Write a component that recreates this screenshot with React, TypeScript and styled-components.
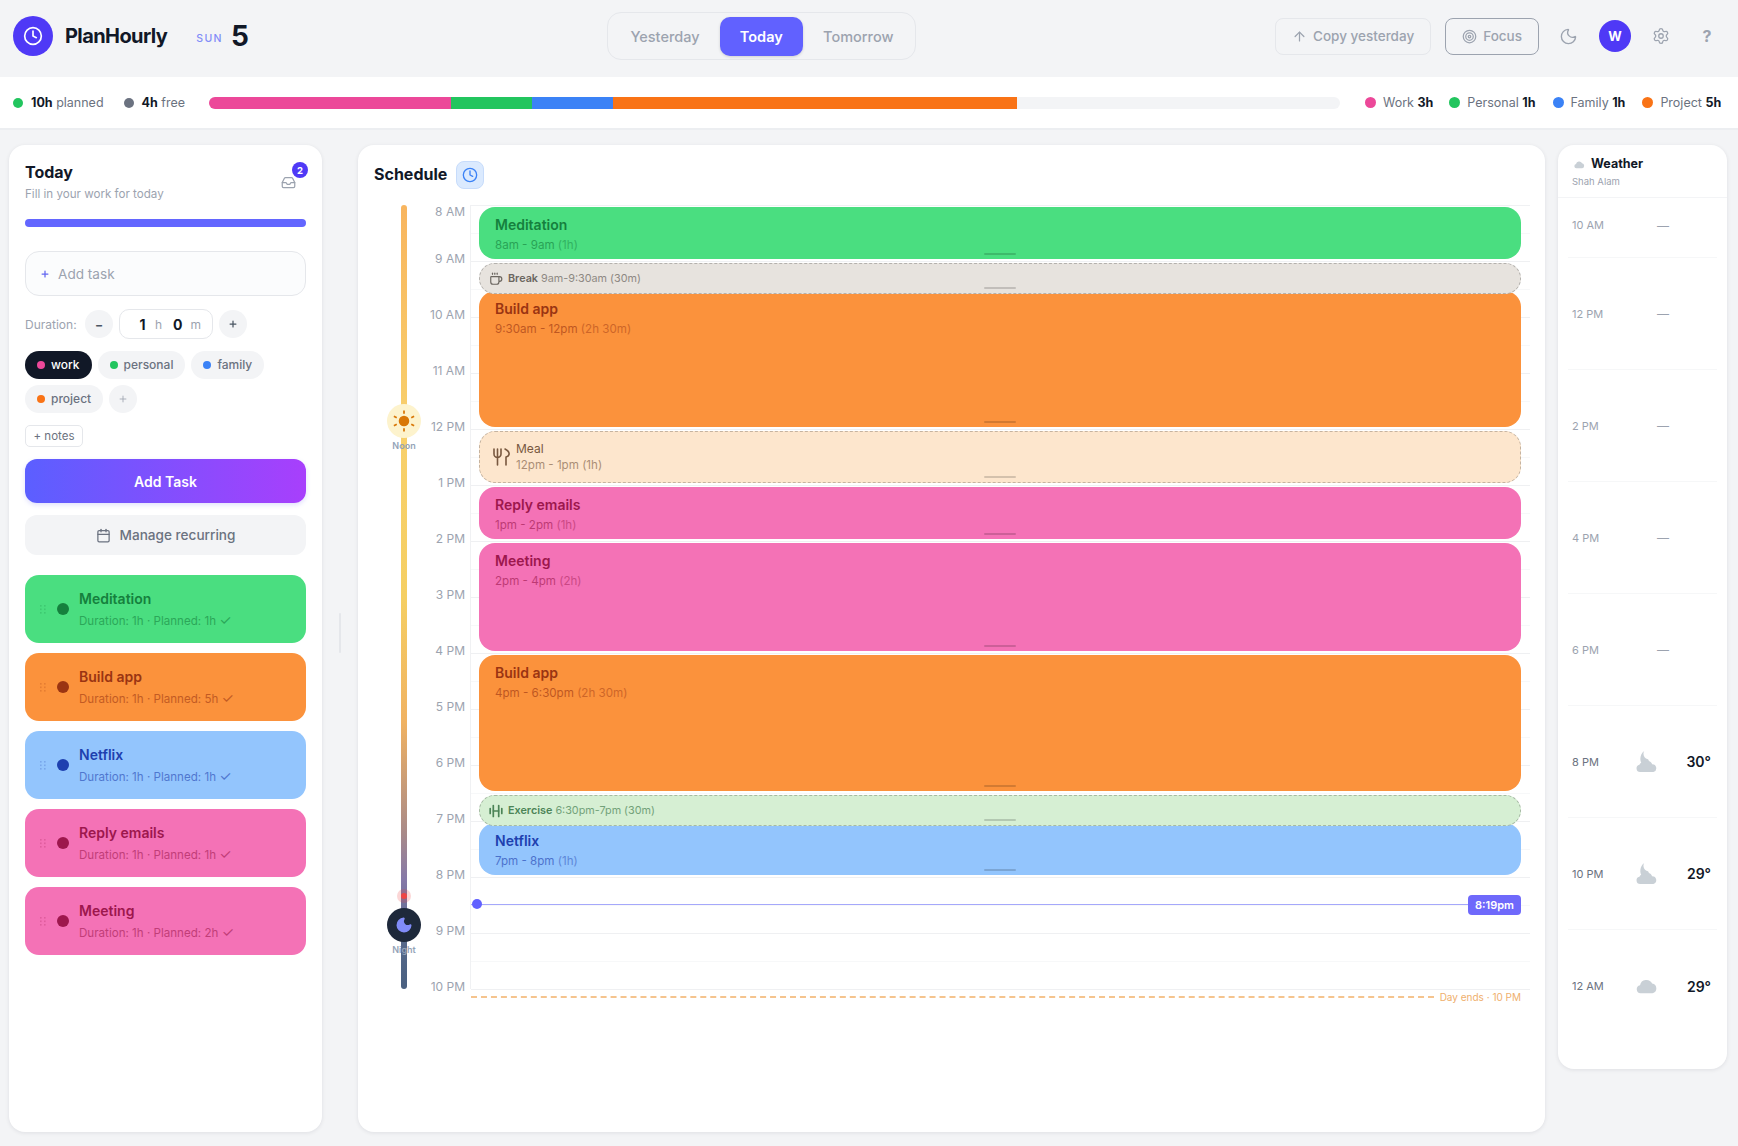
import React from "react";
import styled, { createGlobalStyle } from "styled-components";
import { ArrowUp, Calendar, Clock, Coffee, Inbox, Moon, Plus, Settings, Target } from "lucide-react";

const GlobalStyle = createGlobalStyle`
  html, body { margin: 0; padding: 0; background: #f3f4f6; }
  body { font-family: Inter, "Noto Sans", "Liberation Sans", sans-serif; color: #111827; }
  * { box-sizing: border-box; }
`;

const Page = styled.div`
  width: 1738px;
  height: 1146px;
  display: flex;
  flex-direction: column;
  overflow: hidden;
`;

/* top bar */
const Header = styled.header`
  height: 77px;
  padding: 0 15px 5px 13px;
  display: flex;
  justify-content: space-between;
  align-items: center;
`;
const Brand = styled.div`
  display: flex;
  align-items: center;
`;
const LogoMark = styled.div`
  width: 40px;
  height: 40px;
  border-radius: 50%;
  background: #4f39f6;
  color: #fff;
  display: flex;
  align-items: center;
  justify-content: center;
`;
const BrandName = styled.div`
  margin-left: 12px;
  font-size: 20px;
  font-weight: 700;
  letter-spacing: -0.6px;
`;
const DayName = styled.span`
  margin-left: 29px;
  font-size: 10.5px;
  font-weight: 500;
  letter-spacing: 1.4px;
  color: #818cf8;
  align-self: flex-end;
  padding-bottom: 11px;
`;
const DayNumber = styled.span`
  margin-left: 8px;
  font-size: 28px;
  font-weight: 700;
`;
const Segments = styled.div`
  width: 309px;
  height: 48px;
  border: 1px solid #e5e7eb;
  border-radius: 14px;
  padding: 4px;
  display: flex;
  align-items: center;
  justify-content: space-between;
`;
const Segment = styled.div<{ $active?: boolean }>`
  height: 39px;
  padding: 0 ${(p) => (p.$active ? 20 : 18)}px;
  border-radius: 10px;
  display: flex;
  align-items: center;
  font-size: 14.5px;
  font-weight: ${(p) => (p.$active ? 600 : 500)};
  color: ${(p) => (p.$active ? "#fff" : "#9ca3af")};
  background: ${(p) => (p.$active ? "#6161ff" : "transparent")};
  box-shadow: ${(p) => (p.$active ? "0 1px 3px rgba(0,0,0,.15)" : "none")};
`;
const HeaderActions = styled.div`
  display: flex;
  align-items: center;
  gap: 14px;
`;
const ActionButton = styled.div<{ $strong?: boolean }>`
  height: 37px;
  padding: 0 16px;
  border-radius: 8px;
  border: 1px solid ${(p) => (p.$strong ? "#9ca3af" : "#e5e7eb")};
  display: flex;
  align-items: center;
  gap: 6px;
  font-size: 13.5px;
  font-weight: 500;
  color: #9ca3af;
`;
const IconButton = styled.div`
  width: 32px;
  height: 32px;
  display: flex;
  align-items: center;
  justify-content: center;
  color: #9ca3af;
  font-size: 16px;
  font-weight: 700;
`;
const Avatar = styled.div`
  width: 32px;
  height: 32px;
  border-radius: 50%;
  background: #4f39f6;
  color: #fff;
  display: flex;
  align-items: center;
  justify-content: center;
  font-size: 13px;
  font-weight: 700;
`;

/* stats strip */
const StatsBar = styled.div`
  height: 53px;
  background: #fff;
  border-bottom: 2px solid #eceef1;
  padding: 0 13px;
  display: flex;
  align-items: center;
`;
const Stat = styled.div<{ $gap?: number }>`
  display: flex;
  align-items: center;
  font-size: 12.5px;
  color: #6b7280;
  white-space: nowrap;
  margin-right: ${(p) => p.$gap ?? 0}px;
  b {
    color: #111827;
    font-weight: 700;
  }
`;
const Dot = styled.i<{ $color: string; $size?: number; $gap?: number }>`
  display: block;
  flex: none;
  width: ${(p) => p.$size ?? 11}px;
  height: ${(p) => p.$size ?? 11}px;
  border-radius: 50%;
  background: ${(p) => p.$color};
  margin-right: ${(p) => p.$gap ?? 7}px;
`;
const Bar = styled.div`
  width: 1131px;
  height: 12px;
  margin-left: 24px;
  margin-right: 25px;
  border-radius: 6px;
  background: #f3f4f6;
  display: flex;
  overflow: hidden;
  flex: none;
`;
const BarPart = styled.div<{ $color: string; $hours: number }>`
  width: calc(100% * ${(p) => p.$hours} / 14);
  background: ${(p) => p.$color};
`;

/* main area */
const Main = styled.main`
  flex: 1;
  min-height: 0;
  padding: 15px 11px 14px 9px;
  display: flex;
  align-items: stretch;
`;
const Card = styled.section`
  background: #fff;
  border-radius: 16px;
  box-shadow: 0 1px 4px rgba(17, 24, 39, 0.09);
`;
const TodayCard = styled(Card)`
  width: 313px;
  flex: none;
  padding: 16px;
`;
const Gutter = styled.div`
  width: 36px;
  flex: none;
  display: flex;
  align-items: center;
  justify-content: center;
  padding-bottom: 12px;
`;
const GutterHandle = styled.div`
  width: 2px;
  height: 40px;
  border-radius: 1px;
  background: #e5e7eb;
`;
const TodayHead = styled.div`
  display: flex;
  justify-content: space-between;
`;
const CardTitle = styled.div`
  font-size: 16px;
  font-weight: 700;
  line-height: 22px;
`;
const CardSub = styled.div`
  margin-top: 3px;
  font-size: 11.6px;
  line-height: 16px;
  color: #9ca3af;
`;
const InboxWrap = styled.div`
  position: relative;
  width: 30px;
  padding: 13px 0 0 5px;
  color: #9ca3af;
`;
const Badge = styled.span`
  position: absolute;
  top: 1px;
  right: -2px;
  width: 16px;
  height: 16px;
  border-radius: 50%;
  background: #4f39f6;
  color: #fff;
  font-size: 9.5px;
  font-weight: 700;
  display: flex;
  align-items: center;
  justify-content: center;
`;
const Progress = styled.div`
  margin-top: 17px;
  height: 8px;
  border-radius: 4px;
  background: #6366ff;
`;
const AddInput = styled.div`
  margin-top: 24px;
  height: 45px;
  border: 1px solid #e5e7eb;
  border-radius: 14px;
  background: #fbfcfd;
  padding: 0 14px;
  display: flex;
  align-items: center;
  gap: 8px;
  font-size: 13.6px;
  color: #9ca3af;
  svg {
    color: #6366f1;
  }
`;
const DurationRow = styled.div`
  margin-top: 13px;
  display: flex;
  align-items: center;
  font-size: 12px;
  color: #9ca3af;
`;
const DurationLabel = styled.span`
  width: 60px;
`;
const RoundButton = styled.div<{ $soft?: boolean }>`
  width: 28px;
  height: 28px;
  border-radius: 50%;
  background: #f3f4f6;
  color: ${(p) => (p.$soft ? "#9ca3af" : "#4b5563")};
  display: flex;
  align-items: center;
  justify-content: center;
  flex: none;
`;
const DurationBox = styled.div`
  width: 94px;
  height: 30px;
  margin: 0 6px;
  border: 1px solid #e5e7eb;
  border-radius: 10px;
  display: flex;
  align-items: center;
  padding-left: 18px;
  font-size: 12px;
  color: #9ca3af;
  b {
    font-size: 14px;
    font-weight: 700;
    color: #111827;
    margin: 0 8px 0 0;
    min-width: 9px;
    text-align: center;
  }
  span {
    margin-right: 11px;
  }
`;
const Tags = styled.div`
  margin-top: 12px;
  display: flex;
  flex-wrap: wrap;
  gap: 6px;
  width: 250px;
`;
const Tag = styled.div<{ $active?: boolean }>`
  height: 28px;
  padding: 0 12px 1px;
  border-radius: 14px;
  display: flex;
  align-items: center;
  font-size: 12px;
  font-weight: 500;
  color: ${(p) => (p.$active ? "#fff" : "#6b7280")};
  background: ${(p) => (p.$active ? "#111827" : "#f3f4f6")};
`;
const NotesChip = styled.div`
  margin-top: 12px;
  width: 58px;
  height: 22px;
  border: 1px solid #e5e7eb;
  border-radius: 5px;
  display: flex;
  align-items: center;
  justify-content: center;
  font-size: 11.5px;
  color: #6b7280;
`;
const AddButton = styled.div`
  margin-top: 12px;
  height: 44px;
  border-radius: 12px;
  background: linear-gradient(90deg, #5b5fff, #a83ffc);
  box-shadow: 0 2px 5px rgba(99, 102, 241, 0.2);
  color: #fff;
  font-size: 14px;
  font-weight: 600;
  display: flex;
  align-items: center;
  justify-content: center;
`;
const RecurringButton = styled.div`
  margin-top: 12px;
  height: 40px;
  border-radius: 12px;
  background: #f3f4f6;
  color: #6b7280;
  font-size: 13.6px;
  font-weight: 500;
  display: flex;
  align-items: center;
  justify-content: center;
  gap: 9px;
`;
const TaskList = styled.div`
  margin-top: 20px;
  display: flex;
  flex-direction: column;
  gap: 10px;
`;
const TaskCard = styled.div<{ $bg: string; $ink: string }>`
  height: 68px;
  border-radius: 14px;
  background: ${(p) => p.$bg};
  color: ${(p) => p.$ink};
  display: flex;
  align-items: center;
  padding-left: 15px;
`;
const Grip = styled.svg`
  width: 6px;
  height: 9px;
  opacity: 0.22;
  margin-right: 11px;
  flex: none;
`;
const TaskDot = styled.i<{ $ink: string }>`
  display: block;
  width: 12px;
  height: 12px;
  border-radius: 50%;
  background: ${(p) => p.$ink};
  margin-right: 10px;
  flex: none;
`;
const TaskText = styled.div`
  padding-bottom: 1px;
`;
const TaskTitle = styled.div`
  font-size: 14px;
  font-weight: 600;
  line-height: 20px;
`;
const TaskMeta = styled.div`
  margin-top: 4px;
  font-size: 11.6px;
  line-height: 16px;
  opacity: 0.58;
`;
const CheckMark = styled.span`
  font-size: 14px;
  line-height: 14px;
`;

/* schedule */
const ScheduleCard = styled(Card)`
  flex: 1;
  min-width: 0;
  padding: 16px 15px 0 16px;
`;
const ScheduleHead = styled.div`
  height: 28px;
  display: flex;
  align-items: center;
  gap: 9px;
`;
const ScheduleTitle = styled.div`
  font-size: 16px;
  font-weight: 700;
  margin-bottom: 2px;
`;
const ClockChip = styled.div`
  width: 28px;
  height: 28px;
  border-radius: 8px;
  background: #dbeafe;
  border: 1px solid #c7dcfb;
  color: #3b82f6;
  display: flex;
  align-items: center;
  justify-content: center;
`;
const Timeline = styled.div`
  margin-top: 16px;
  display: flex;
`;
const RailColumn = styled.div`
  position: relative;
  width: 60px;
  flex: none;
  display: flex;
  justify-content: center;
`;
const Rail = styled.div`
  width: 6px;
  height: 784px;
  border-radius: 3px;
  background: linear-gradient(
    180deg,
    #f8b55f 0%,
    #f8d06c 28%,
    #f5cf63 50%,
    #f0b262 66%,
    #a98a88 80%,
    #8679a8 86%,
    #586a8c 93%,
    #4a6080 100%
  );
`;
const RailMarker = styled.div<{ $top: number }>`
  position: absolute;
  left: 0;
  right: 0;
  top: ${(p) => p.$top}px;
  display: flex;
  flex-direction: column;
  align-items: center;
  font-size: 9px;
  line-height: 12px;
  font-weight: 600;
  color: #94a3b8;
`;
const MarkerDisc = styled.div<{ $night?: boolean }>`
  width: 34px;
  height: 34px;
  margin-bottom: 2px;
  border-radius: 50%;
  background: ${(p) => (p.$night ? "#1e293b" : "#fdf3cd")};
  display: flex;
  align-items: center;
  justify-content: center;
`;
const NowDot = styled.div`
  position: absolute;
  left: 27px;
  top: 688px;
  width: 6px;
  height: 6px;
  border-radius: 50%;
  background: #ef4444;
  box-shadow: 0 0 0 4px rgba(239, 68, 68, 0.22);
`;
const LabelColumn = styled.div`
  width: 31px;
  margin-right: 5px;
  flex: none;
  display: flex;
  flex-direction: column;
  align-items: stretch;
`;
const HourLabel = styled.div`
  height: 56px;
  line-height: 14px;
  font-size: 12px;
  color: #9ca3af;
  white-space: nowrap;
  display: flex;
  justify-content: flex-end;
  &:first-child {
    height: 46.7px;
  }
`;
const Grid = styled.div`
  position: relative;
  flex: 1;
  height: 784px;
  border-left: 1px solid #f0f1f3;
  border-top: 1px solid #f0f1f3;
`;
const GridRow = styled.div<{ $hour: boolean }>`
  height: 28px;
  border-bottom: 1px solid ${(p) => (p.$hour ? "#eff0f2" : "#f7f8f9")};
`;
const Block = styled.div<{ $top: number; $height: number; $bg: string; $ink: string; $over?: boolean }>`
  position: absolute;
  left: 8px;
  right: 9px;
  top: ${(p) => p.$top}px;
  height: ${(p) => p.$height}px;
  border-radius: 16px;
  background: ${(p) => p.$bg};
  color: ${(p) => p.$ink};
  padding: 8px 16px;
  z-index: ${(p) => (p.$over ? 2 : 1)};
`;
const BlockTitle = styled.div`
  font-size: 14px;
  font-weight: 600;
  line-height: 20px;
`;
const BlockTime = styled.div`
  margin-top: 2px;
  font-size: 11.6px;
  line-height: 16px;
  opacity: 0.62;
  span {
    opacity: 0.75;
  }
`;
const BlockHandle = styled.div`
  position: absolute;
  left: 50%;
  bottom: 4px;
  width: 32px;
  height: 2px;
  margin-left: -16px;
  border-radius: 1px;
  background: rgba(0, 0, 0, 0.16);
`;
const BreakBlock = styled(Block)`
  padding: 0 9px;
  border: 1px dashed rgba(0, 0, 0, 0.22);
  display: flex;
  align-items: center;
  gap: 5px;
  font-size: 10.8px;
  b {
    font-weight: 600;
  }
  span {
    opacity: 0.72;
  }
`;
const MealBlock = styled(Block)`
  padding: 0 12px;
  border: 1px dashed rgba(0, 0, 0, 0.22);
  display: flex;
  align-items: center;
  gap: 4px;
  font-size: 12px;
  line-height: 16px;
  span {
    display: block;
    font-size: 11.6px;
    opacity: 0.62;
  }
`;
const NowLine = styled.div`
  position: absolute;
  left: 0;
  right: 9px;
  top: 698px;
  height: 1px;
  background: #a5a8fb;
  z-index: 3;
`;
const NowKnob = styled.div`
  position: absolute;
  left: 1px;
  top: -5px;
  width: 10px;
  height: 10px;
  border-radius: 50%;
  background: #6161ff;
`;
const NowTag = styled.div`
  position: absolute;
  right: 0;
  top: -9px;
  width: 53px;
  height: 20px;
  border-radius: 4px;
  background: #6f69fb;
  color: #fff;
  font-size: 11px;
  font-weight: 600;
  display: flex;
  align-items: center;
  justify-content: center;
`;
const DayEnd = styled.div`
  position: absolute;
  left: 0;
  right: 9px;
  top: 784px;
  display: flex;
  align-items: center;
  gap: 6px;
  font-size: 10px;
  line-height: 14px;
  color: #efaf6d;
  white-space: nowrap;
`;
const DayEndRule = styled.div`
  flex: 1;
  border-top: 2px dashed #f5c48e;
`;

/* weather */
const WeatherCard = styled(Card)`
  width: 169px;
  height: 924px;
  flex: none;
  margin-left: 13px;
  padding-bottom: 27px;
`;
const WeatherHead = styled.div`
  height: 53px;
  padding: 10px 14px 0;
  border-bottom: 1px solid #f3f4f6;
`;
const WeatherTitle = styled.div`
  display: flex;
  align-items: center;
  gap: 6px;
  font-size: 12.5px;
  font-weight: 700;
  line-height: 18px;
  svg {
    margin-left: 2px;
  }
`;
const WeatherPlace = styled.div`
  margin-top: 2px;
  font-size: 9.5px;
  line-height: 14px;
  color: #9ca3af;
`;
const WeatherRow = styled.div<{ $first?: boolean }>`
  height: ${(p) => (p.$first ? 60 : 112)}px;
  margin: 0 10px;
  padding: ${(p) => (p.$first ? "0 4px 5px" : "0 4px")};
  display: grid;
  grid-template-columns: 64px 1fr auto;
  align-items: center;
  border-bottom: 1px solid #f6f7f8;
  font-size: 11px;
  color: #6b7280;
  &:last-child {
    border-bottom: none;
  }
`;
const WeatherEmpty = styled(WeatherRow)`
  color: #9ca3af;
`;
const WeatherDash = styled.span`
  padding-left: 21px;
  font-size: 12px;
`;
const Temp = styled.span`
  font-size: 14px;
  font-weight: 600;
  color: #111827;
  padding-right: 2px;
`;

const GripIcon = () => (
  <Grip viewBox="0 0 6 9" fill="currentColor">
    {[0, 4].map((x) =>
      [0, 3.5, 7].map((y) => <rect key={`${x}-${y}`} x={x} y={y} width="1.6" height="1.6" />)
    )}
  </Grip>
);

const SunIcon = () => (
  <svg width="22" height="22" viewBox="0 0 20 20" stroke="#d97706" strokeWidth="1.6" fill="#d97706">
    <circle cx="10" cy="10" r="4.8" stroke="none" />
    <path d="M10 0.5v2.8M10 16.7v2.8M0.8 5.6l2.6 1.4M16.6 13l2.6 1.4M0.8 14.4l2.6-1.4M16.6 7l2.6-1.4" />
  </svg>
);

const CloudShape = () => (
  <path d="M5 20a4.5 4.5 0 0 1-.6-8.9A7 7 0 0 1 17.6 9.4 5.4 5.4 0 0 1 18 20z" />
);

const CloudIcon = ({ size = 22 }: { size?: number }) => (
  <svg width={size} height={size} viewBox="0 0 24 24" fill="#c9d0d6">
    <CloudShape />
  </svg>
);

const CloudMoonIcon = () => (
  <svg width="22" height="22" viewBox="0 0 24 24" fill="#c9d0d6">
    <path d="M9 0C7 3 8.5 8 13 9c1.5 1 1.6 4-1 6H7C3.5 11 4 3.5 9 0z" />
    <path d="M4.5 23a4 4 0 0 1-.8-7.9A4 4 0 0 1 9 13c1-1.6 3-2.6 5-2 2 .4 3 2 3.6 3.4A4.4 4.4 0 0 1 19 23z" />
  </svg>
);

const UtensilsIcon = () => (
  <svg width="20" height="20" viewBox="0 0 20 20" fill="none" stroke="currentColor" strokeWidth="1.6" strokeLinecap="round" strokeLinejoin="round">
    <path d="M2 2v5a3.5 3.5 0 0 0 7 0V2M5.5 2v16" />
    <path d="M13 2c3 1.5 4.5 3.5 4 5.5-.3 1.2-1.8 2.2-3 2.5V18" />
  </svg>
);

const DumbbellIcon = () => (
  <svg width="14" height="14" viewBox="0 0 14 14" fill="none" stroke="currentColor" strokeWidth="1.7" strokeLinecap="round">
    <path d="M1.2 4.5v5M4.3 1.5v11M9.7 1.5v11M12.8 4.5v5" />
    <path d="M4.3 7h5.4" strokeWidth="1.4" />
  </svg>
);

const legend = [
  { name: "Work", hours: 3, color: "#ec4899", gap: 16 },
  { name: "Personal", hours: 1, color: "#22c55e", gap: 17 },
  { name: "Family", hours: 1, color: "#3b82f6", gap: 17 },
  { name: "Project", hours: 5, color: "#f97316", gap: 0 },
];

const palette = {
  green: { bg: "#4ade80", ink: "#15803d" },
  orange: { bg: "#fb923c", ink: "#9a3412" },
  blue: { bg: "#93c5fd", ink: "#1e40af" },
  pink: { bg: "#f472b6", ink: "#9d174d" },
};

const tasks = [
  { name: "Meditation", planned: "1h", tone: palette.green },
  { name: "Build app", planned: "5h", tone: palette.orange },
  { name: "Netflix", planned: "1h", tone: palette.blue },
  { name: "Reply emails", planned: "1h", tone: palette.pink },
  { name: "Meeting", planned: "2h", tone: palette.pink },
];

const blocks = [
  { name: "Meditation", time: "8am - 9am", span: "(1h)", top: 1, height: 52, tone: palette.green },
  { name: "Build app", time: "9:30am - 12pm", span: "(2h 30m)", top: 85, height: 136, tone: palette.orange },
  { name: "Reply emails", time: "1pm - 2pm", span: "(1h)", top: 281, height: 52, tone: palette.pink },
  { name: "Meeting", time: "2pm - 4pm", span: "(2h)", top: 337, height: 108, tone: palette.pink },
  { name: "Build app", time: "4pm - 6:30pm", span: "(2h 30m)", top: 449, height: 136, tone: palette.orange },
  { name: "Netflix", time: "7pm - 8pm", span: "(1h)", top: 617, height: 52, tone: palette.blue },
];

const hours = ["8 AM", "9 AM", "10 AM", "11 AM", "12 PM", "1 PM", "2 PM", "3 PM", "4 PM", "5 PM", "6 PM", "7 PM", "8 PM", "9 PM", "10 PM"];

const App = () => {
  return (
    <Page>
      <GlobalStyle />
      <Header>
        <Brand>
          <LogoMark>
            <Clock size={20} strokeWidth={2} />
          </LogoMark>
          <BrandName>PlanHourly</BrandName>
          <DayName>SUN</DayName>
          <DayNumber>5</DayNumber>
        </Brand>
        <Segments>
          <Segment>Yesterday</Segment>
          <Segment $active>Today</Segment>
          <Segment>Tomorrow</Segment>
        </Segments>
        <HeaderActions>
          <ActionButton>
            <ArrowUp size={15} />
            Copy yesterday
          </ActionButton>
          <ActionButton $strong>
            <Target size={15} />
            Focus
          </ActionButton>
          <IconButton>
            <Moon size={19} strokeWidth={1.7} />
          </IconButton>
          <Avatar>W</Avatar>
          <IconButton>
            <Settings size={18} strokeWidth={1.7} />
          </IconButton>
          <IconButton>?</IconButton>
        </HeaderActions>
      </Header>

      <StatsBar>
        <Stat $gap={20}>
          <Dot $color="#22c55e" $size={10} $gap={8} />
          <b>10h</b>&nbsp;planned
        </Stat>
        <Stat>
          <Dot $color="#6b7280" $size={10} $gap={8} />
          <b>4h</b>&nbsp;free
        </Stat>
        <Bar>
          {legend.map((l) => (
            <BarPart key={l.name} $color={l.color} $hours={l.hours} />
          ))}
        </Bar>
        {legend.map((l) => (
          <Stat key={l.name} $gap={l.gap}>
            <Dot $color={l.color} />
            {l.name}&nbsp;<b>{l.hours}h</b>
          </Stat>
        ))}
      </StatsBar>

      <Main>
        <TodayCard>
          <TodayHead>
            <div>
              <CardTitle>Today</CardTitle>
              <CardSub>Fill in your work for today</CardSub>
            </div>
            <InboxWrap>
              <Inbox size={15} />
              <Badge>2</Badge>
            </InboxWrap>
          </TodayHead>
          <Progress />
          <AddInput>
            <Plus size={10} strokeWidth={3} />
            Add task
          </AddInput>
          <DurationRow>
            <DurationLabel>Duration:</DurationLabel>
            <RoundButton>
              <b>−</b>
            </RoundButton>
            <DurationBox>
              <b>1</b>
              <span>h</span>
              <b>0</b>
              <span>m</span>
            </DurationBox>
            <RoundButton>
              <Plus size={10} strokeWidth={3} />
            </RoundButton>
          </DurationRow>
          <Tags>
            <Tag $active>
              <Dot $color="#ec4899" $size={8} $gap={6} />
              work
            </Tag>
            <Tag>
              <Dot $color="#22c55e" $size={8} $gap={6} />
              personal
            </Tag>
            <Tag>
              <Dot $color="#3b82f6" $size={8} $gap={6} />
              family
            </Tag>
            <Tag>
              <Dot $color="#f97316" $size={8} $gap={6} />
              project
            </Tag>
            <RoundButton $soft>
              <Plus size={10} strokeWidth={2} />
            </RoundButton>
          </Tags>
          <NotesChip>+ notes</NotesChip>
          <AddButton>Add Task</AddButton>
          <RecurringButton>
            <Calendar size={15} />
            Manage recurring
          </RecurringButton>
          <TaskList>
            {tasks.map((t) => (
              <TaskCard key={t.name} $bg={t.tone.bg} $ink={t.tone.ink}>
                <GripIcon />
                <TaskDot $ink={t.tone.ink} />
                <TaskText>
                  <TaskTitle>{t.name}</TaskTitle>
                  <TaskMeta>
                    Duration: 1h · Planned: {t.planned} <CheckMark>✓</CheckMark>
                  </TaskMeta>
                </TaskText>
              </TaskCard>
            ))}
          </TaskList>
        </TodayCard>

        <Gutter>
          <GutterHandle />
        </Gutter>

        <ScheduleCard>
          <ScheduleHead>
            <ScheduleTitle>Schedule</ScheduleTitle>
            <ClockChip>
              <Clock size={16} />
            </ClockChip>
          </ScheduleHead>
          <Timeline>
            <RailColumn>
              <Rail />
              <RailMarker $top={199}>
                <MarkerDisc>
                  <SunIcon />
                </MarkerDisc>
                Noon
              </RailMarker>
              <NowDot />
              <RailMarker $top={703}>
                <MarkerDisc $night>
                  <Moon size={18} fill="#818cf8" color="#818cf8" />
                </MarkerDisc>
                Night
              </RailMarker>
            </RailColumn>
            <LabelColumn>
              {hours.map((h) => (
                <HourLabel key={h}>{h}</HourLabel>
              ))}
            </LabelColumn>
            <Grid>
              {Array.from({ length: 28 }, (_, i) => (
                <GridRow key={i} $hour={i % 2 === 1} />
              ))}
              {blocks.map((b) => (
                <Block key={b.top} $top={b.top} $height={b.height} $bg={b.tone.bg} $ink={b.tone.ink}>
                  <BlockTitle>{b.name}</BlockTitle>
                  <BlockTime>
                    {b.time} <span>{b.span}</span>
                  </BlockTime>
                  <BlockHandle />
                </Block>
              ))}
              <BreakBlock $over $top={57} $height={31} $bg="#e7e3de" $ink="#6b6660">
                <Coffee size={14} />
                <div>
                  <b>Break</b> <span>9am-9:30am (30m)</span>
                </div>
                <BlockHandle />
              </BreakBlock>
              <MealBlock $top={225} $height={52} $bg="#fde6cd" $ink="#78583f">
                <UtensilsIcon />
                <div>
                  Meal
                  <span>12pm - 1pm (1h)</span>
                </div>
                <BlockHandle />
              </MealBlock>
              <BreakBlock $over $top={589} $height={31} $bg="#d6efd3" $ink="#4c8457">
                <DumbbellIcon />
                <div>
                  <b>Exercise</b> <span>6:30pm-7pm (30m)</span>
                </div>
                <BlockHandle />
              </BreakBlock>
              <NowLine>
                <NowKnob />
                <NowTag>8:19pm</NowTag>
              </NowLine>
              <DayEnd>
                <DayEndRule />
                <span>Day ends · 10 PM</span>
              </DayEnd>
            </Grid>
          </Timeline>
        </ScheduleCard>

        <WeatherCard>
          <WeatherHead>
            <WeatherTitle>
              <CloudIcon size={11} />
              Weather
            </WeatherTitle>
            <WeatherPlace>Shah Alam</WeatherPlace>
          </WeatherHead>
          <WeatherEmpty $first>
            <span>10 AM</span>
            <WeatherDash>—</WeatherDash>
          </WeatherEmpty>
          {["12 PM", "2 PM", "4 PM", "6 PM"].map((h) => (
            <WeatherEmpty key={h}>
              <span>{h}</span>
              <WeatherDash>—</WeatherDash>
            </WeatherEmpty>
          ))}
          <WeatherRow>
            <span>8 PM</span>
            <CloudMoonIcon />
            <Temp>30°</Temp>
          </WeatherRow>
          <WeatherRow>
            <span>10 PM</span>
            <CloudMoonIcon />
            <Temp>29°</Temp>
          </WeatherRow>
          <WeatherRow>
            <span>12 AM</span>
            <CloudIcon />
            <Temp>29°</Temp>
          </WeatherRow>
        </WeatherCard>
      </Main>
    </Page>
  );
};

export default App;
